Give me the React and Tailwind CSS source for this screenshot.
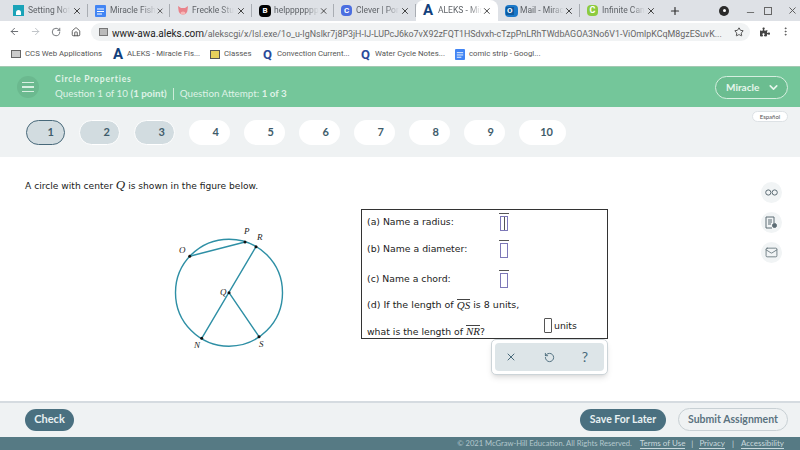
import React from "react";
import { ArrowLeft, ArrowRight, RotateCw, House, Star, MoreVertical, Plus, Minus, X, ChevronDown, Mail, RotateCcw } from "lucide-react";
import { FaPuzzlePiece } from "react-icons/fa";

function TealIcon() {
  return (
    <div className="w-[11px] h-[11px] bg-[#1aa3b8] flex items-end justify-center">
      <div className="w-[5px] h-[5px] bg-white mb-[1px] rounded-t-sm" />
    </div>
  );
}
function DocIcon({ size = 11 }) {
  return (
    <svg width={size} height={size + 1} viewBox="0 0 11 12">
      <rect width="11" height="12" rx="1" fill="#4285f4" />
      <path d="M2 4h7M2 6.5h7M2 9h5" stroke="#fff" strokeWidth="1" />
    </svg>
  );
}
function PigIcon() {
  return (
    <svg width="12" height="12" viewBox="0 0 12 12">
      <path d="M1 1l3 2h4l3-2-.5 4a4.5 4.5 0 11-9 0z" fill="#e9828a" />
      <ellipse cx="6" cy="8" rx="2.4" ry="1.6" fill="#f7b5b5" />
    </svg>
  );
}
function BlackIcon() {
  return (
    <div className="w-[12px] h-[12px] bg-black rounded-sm flex items-center justify-center text-white text-[8px] font-bold leading-none">B</div>
  );
}
function CleverIcon() {
  return <div className="w-[11px] h-[11px] bg-[#4b6ee0] rounded-sm flex items-center justify-center text-white text-[8px] font-bold leading-none">C</div>;
}
function AleksIcon() {
  return <span className="text-[#123f7c] text-[15px] leading-none font-bold">A</span>;
}
function OutlookIcon() {
  return (
    <div className="w-[13px] h-[12px] bg-[#1b78c8] rounded-sm flex items-center justify-start text-white text-[8px] font-bold leading-none pl-[1px]">
      <span className="bg-[#0f5a9e] px-[1px]">O</span>
    </div>
  );
}
function GreenC() {
  return <div className="w-[11px] h-[11px] bg-[#8ccb3f] rounded-sm flex items-center justify-center text-white text-[9px] font-bold leading-none">C</div>;
}

const tabs = [
  { title: "Setting Not", icon: <TealIcon /> },
  { title: "Miracle Fish", icon: <DocIcon /> },
  { title: "Freckle Stu", icon: <PigIcon /> },
  { title: "helppppppp", icon: <BlackIcon /> },
  { title: "Clever | Por", icon: <CleverIcon /> },
  { title: "ALEKS - Mir", icon: <AleksIcon />, active: true },
  { title: "Mail - Mirac", icon: <OutlookIcon /> },
  { title: "Infinite Can", icon: <GreenC /> },
];

function Tab({ tab, last }) {
  return (
    <div className={"w-[82px] h-[21px] flex items-center pl-[7px] pr-[6px] relative " + (tab.active ? "bg-white rounded-t-lg" : "")}>
      <div className="w-[15px] flex justify-start shrink-0">{tab.icon}</div>
      <div className="whitespace-nowrap text-[8.5px] text-[#5f6368] [mask-image:linear-gradient(to_right,black_70%,transparent)]">{tab.title}</div>
      <X size={10} strokeWidth={2.2} className="ml-auto text-[#333]" />
      {!tab.active && !last && <div className="absolute right-0 top-[4px] h-[13px] w-px bg-[#a9adb3]" />}
    </div>
  );
}

function Bookmark({ icon, label, width }) {
  return (
    <div className="flex items-center" style={{ width }}>
      <div className="w-[14px] shrink-0 flex justify-start items-center">{icon}</div>
      <span className="text-[7.8px] text-[#555] whitespace-nowrap">{label}</span>
    </div>
  );
}

function QIcon() {
  return <span className="text-[#2b4a9a] text-[13px] leading-none font-bold">Q</span>;
}

function ChromeBars() {
  return (
    <div className="font-['Roboto',sans-serif]">
      <div className="h-[21px] bg-[#dee1e6] flex pl-[6px] items-center">
        {tabs.map((t, i) => (
          <Tab key={t.title} tab={t} last={i === tabs.length - 1} />
        ))}
        <Plus size={12} strokeWidth={2.4} className="text-[#333] ml-[7px]" />
        <div className="ml-auto flex items-center pr-[2px]">
          <div className="w-[10px] h-[10px] rounded-full bg-[#2a2a2a] flex items-center justify-center mr-[16px]">
            <div className="w-[3px] h-[3px] bg-white rounded-full" />
          </div>
          <Minus size={11} className="text-[#666] mr-[8px] mt-[4px]" />
          <div className="w-[8px] h-[8px] border border-[#666] mr-[15px]" />
          <X size={11} className="text-[#555]" />
        </div>
      </div>
      <div className="h-[21px] bg-white flex items-center pl-[9px]">
        <ArrowLeft size={11} className="text-[#5f6368]" />
        <ArrowRight size={11} className="text-[#bbbfc4] ml-[10px]" />
        <RotateCw size={10} className="text-[#5f6368] ml-[10px]" />
        <House size={10} className="text-[#444] ml-[10px]" />
        <div className="ml-[10px] w-[659px] h-[18px] bg-[#f1f3f4] rounded-full flex items-center pl-[8px] pr-[6px]">
          <div className="w-[9px] h-[8px] border border-[#777] bg-[#bbb] shrink-0" />
          <div className="ml-[4px] whitespace-nowrap">
            <span className="text-[#222] text-[10px]">www-awa.aleks.com</span>
            <span className="text-[#666] text-[8.9px]">/alekscgi/x/Isl.exe/1o_u-IgNslkr7j8P3jH-IJ-LUPcJ6ko7vX92zFQT1HSdvxh-cTzpPnLRhTWdbAGOA3No6V1-ViOmlpKCqM8gzESuvK...</span>
          </div>
          <Star size={10} className="text-[#333] ml-auto shrink-0" />
        </div>
        <FaPuzzlePiece size={10} className="text-[#444] ml-[10px]" />
        <MoreVertical size={11} className="text-[#555] ml-[10px]" />
      </div>
      <div className="h-[24px] bg-white flex items-center pl-[11px]">
        <Bookmark width={102} label="CCS Web Applications" icon={<div className="w-[10px] h-[8px] border border-[#666] bg-[#ccc]" />} />
        <Bookmark width={97} label="ALEKS - Miracle Fis..." icon={<AleksIcon />} />
        <Bookmark width={53} label="Classes" icon={<div className="w-[10px] h-[9px] bg-[#e6cf5b] border border-[#555]" />} />
        <Bookmark width={98} label="Convection Current..." icon={<QIcon />} />
        <Bookmark width={94} label="Water Cycle Notes..." icon={<QIcon />} />
        <Bookmark width={90} label="comic strip - Googl..." icon={<DocIcon size={10} />} />
      </div>
    </div>
  );
}

function Header() {
  return (
    <div className="h-[41px] bg-[#74c69a] border-t border-[#a3c9b2] flex items-center pl-[17px] pr-[12px] font-['Lato',sans-serif]">
      <div className="w-[22px] h-[22px] rounded-full bg-[#6bb98f] flex flex-col items-center justify-center gap-[3px]">
        <div className="w-[12px] h-[1.5px] bg-[#d8f0e2]" />
        <div className="w-[12px] h-[1.5px] bg-[#d8f0e2]" />
        <div className="w-[12px] h-[1.5px] bg-[#d8f0e2]" />
      </div>
      <div className="ml-[16px]">
        <div className="text-[8.5px] font-bold tracking-[0.8px] text-[#e2f4e9] leading-[12px]">Circle Properties</div>
        <div className="text-[9.8px] text-[#dff2e7] leading-[15px] mt-[1px] whitespace-nowrap flex items-center">
          <span>Question 1 of 10 <b>(1 point)</b></span>
          <span className="w-px h-[12px] bg-[#cdebd9] mx-[6px]" />
          <span>Question Attempt: <b>1 of 3</b></span>
        </div>
      </div>
      <div className="ml-auto w-[73px] h-[23px] rounded-full border border-[#d6efe0] bg-[#6bbd90] flex items-center pl-[10px] text-[10px] font-bold text-[#e6f6ec]">
        Miracle
        <ChevronDown size={13} strokeWidth={3} className="ml-[8px]" />
      </div>
    </div>
  );
}

function Pill({ n }) {
  const visited = n <= 3;
  const base = n === 10 ? "w-[47px] pr-[13px]" : n === 1 ? "w-[39px] pr-[10px]" : visited ? "w-[41px] pr-[9px]" : "w-[41px] pr-[11px]";
  const look = n === 1
    ? "bg-[#d2dce0] border-[1.5px] border-[#48697a]"
    : visited
      ? "bg-[#d2dce0] border border-white"
      : "bg-white";
  return (
    <div className={"h-[25px] rounded-full flex items-center justify-end text-[11px] font-bold text-[#3f5c6b] " + base + " " + look}>
      {n}
    </div>
  );
}

function QuestionNav() {
  return (
    <div className="h-[50px] bg-[#eff2f3] flex items-start pl-[26px] pr-[12px] pt-[13px] font-['Lato',sans-serif]">
      <div className="flex gap-[14px]">
        {[1, 2, 3, 4, 5, 6, 7, 8, 9, 10].map((n) => (
          <Pill key={n} n={n} />
        ))}
      </div>
      <div className="ml-auto -mt-[9px] w-[36px] h-[11px] rounded-full bg-white border border-[#dde2e5] flex items-center justify-center text-[6px] text-[#555]">Español</div>
    </div>
  );
}

function Figure() {
  const teal = "#2e8fa5";
  return (
    <svg width="130" height="135" viewBox="160 220 130 135" className="shrink-0">
      <circle cx="229" cy="292.7" r="53.5" fill="none" stroke={teal} strokeWidth="1.4" />
      <path d="M189.7 256.3L245 242M256 246.7L201.7 338.3M229 292.7L259 336.7" fill="none" stroke={teal} strokeWidth="1.4" />
      {[[189.7, 256.3], [245, 242], [256, 246.7], [201.7, 338.3], [259, 336.7], [229, 292.7]].map(([x, y]) => (
        <circle key={x} cx={x} cy={y} r="1.5" fill="#111" />
      ))}
      <g fontFamily="Liberation Serif, serif" fontStyle="italic" fontSize="9" fill="#222">
        <text x="179" y="253">O</text>
        <text x="244" y="234">P</text>
        <text x="257" y="240">R</text>
        <text x="220" y="295">Q</text>
        <text x="194" y="348">N</text>
        <text x="259" y="347">S</text>
      </g>
    </svg>
  );
}

function Slot({ cursor }) {
  return (
    <div className="flex flex-col items-center w-[10px]">
      <div className="w-[10px] h-px bg-[#555]" />
      <div className="mt-[2px] w-[8px] h-[15px] border border-[#7d78b8] flex justify-center">
        {cursor && <div className="w-px h-full bg-[#555]" />}
      </div>
    </div>
  );
}

function Over({ children }) {
  return <span className="font-['Liberation_Serif',serif] italic text-[11px] border-t border-[#444] leading-[11px] inline-block">{children}</span>;
}

function AnswerBox() {
  return (
    <div className="w-[247px] h-[130px] border border-[#333] pl-[5px] text-[9.3px] text-[#222] font-['DejaVu_Sans',sans-serif]">
      <div className="h-[23px] flex items-center">
        <span className="w-[132px]">(a) Name a radius:</span>
        <Slot cursor />
      </div>
      <div className="h-[32px] flex items-center">
        <span className="w-[132px]">(b) Name a diameter:</span>
        <Slot />
      </div>
      <div className="h-[28px] flex items-center">
        <span className="w-[132px]">(c) Name a chord:</span>
        <Slot />
      </div>
      <div className="h-[24px] flex items-center whitespace-nowrap text-[9.5px]">
        (d) If the length of&nbsp;<Over>QS</Over>&nbsp;is 8 units,
      </div>
      <div className="h-[21px] flex items-center whitespace-nowrap">
        <span className="w-[177px] mt-[8px]">what is the length of <Over>NR</Over>?</span>
        <div className="w-[8px] h-[15px] border border-[#555] rounded-[1px] -mt-[4px]" />
        <span className="ml-[2px] -mt-[3px]">units</span>
      </div>
    </div>
  );
}

function Toolbar() {
  return (
    <div className="w-[117px] h-[36px] p-[3px] bg-white border border-[#ccd4d8] rounded-[5px] shadow-md">
      <div className="h-full bg-[#dde5e8] rounded-sm flex items-center justify-between pl-[10px] pr-[16px] text-[#48697a]">
        <X size={12} />
        <RotateCcw size={11} />
        <span className="font-['Lato',sans-serif] text-[14px] leading-none">?</span>
      </div>
    </div>
  );
}

function SideIcon({ children }) {
  return <div className="w-[21px] h-[21px] rounded-full bg-[#f1f4f5] flex items-center justify-center text-[#5c6c74]">{children}</div>;
}

function Main() {
  return (
    <div className="flex-1 flex pl-[25px] bg-white">
      <div className="flex-1">
        <div className="pt-[21px] text-[9.15px] leading-[14px] h-[35px] text-[#222] font-['DejaVu_Sans',sans-serif]">
          A circle with center <span className="font-['Liberation_Serif',serif] italic text-[13px]">Q</span> is shown in the figure below.
        </div>
        <div className="flex mt-[17px]">
          <div className="ml-[135px] mt-[11px]">
            <Figure />
          </div>
          <div className="ml-[71px] flex flex-col items-end">
            <AnswerBox />
            <Toolbar />
          </div>
        </div>
      </div>
      <div className="w-[39px] pt-[25px] flex flex-col gap-[9px]">
        <SideIcon>
          <svg width="13" height="7" viewBox="0 0 13 7" fill="none" stroke="currentColor">
            <circle cx="3.3" cy="3.5" r="2.6" />
            <circle cx="9.7" cy="3.5" r="2.6" />
          </svg>
        </SideIcon>
        <SideIcon>
          <svg width="13" height="14" viewBox="0 0 13 14" fill="none" stroke="currentColor">
            <path d="M9 7V1H1v11h6" />
            <path d="M3 4h4M3 6h4M3 8h3" />
            <circle cx="9.5" cy="9.5" r="2" fill="currentColor" />
          </svg>
        </SideIcon>
        <SideIcon><Mail size={13} strokeWidth={1.5} /></SideIcon>
      </div>
    </div>
  );
}

function Footer() {
  return (
    <div className="font-['Lato',sans-serif]">
      <div className="h-[36px] bg-[#eff2f3] border-t-2 border-[#d5dbe0] flex items-center pl-[25px] pr-[12px] pb-px">
        <div className="w-[49px] h-[22px] rounded-full bg-[#4a7080] flex items-center justify-center text-[11px] font-bold text-[#e8f0f2]">Check</div>
        <div className="ml-auto w-[86px] h-[22px] rounded-full bg-[#4a7080] flex items-center justify-center text-[10.5px] font-bold text-[#e8f0f2]">Save For Later</div>
        <div className="ml-[12px] w-[110px] h-[23px] rounded-full border border-[#c8d0d4] flex items-center justify-center text-[10.5px] font-bold text-[#5b7380]">Submit Assignment</div>
      </div>
      <div className="h-[13px] bg-[#567a84] flex items-center justify-end pr-[16px] text-[8px] text-[#c9d8dc] whitespace-nowrap">
        <span className="text-[7.6px] text-[#b4c8cd]">© 2021 McGraw-Hill Education. All Rights Reserved.</span>
        <span className="ml-[8px] border-b border-[#c9d8dc] leading-[10px]">Terms of Use</span>
        <span className="mx-[6px]">|</span>
        <span className="border-b border-[#c9d8dc] leading-[10px]">Privacy</span>
        <span className="mx-[7px]">|</span>
        <span className="border-b border-[#c9d8dc] leading-[10px]">Accessibility</span>
      </div>
    </div>
  );
}

export default function App() {
  return (
    <div className="w-[800px] h-[450px] flex flex-col overflow-hidden bg-white">
      <ChromeBars />
      <Header />
      <QuestionNav />
      <Main />
      <Footer />
    </div>
  );
}
